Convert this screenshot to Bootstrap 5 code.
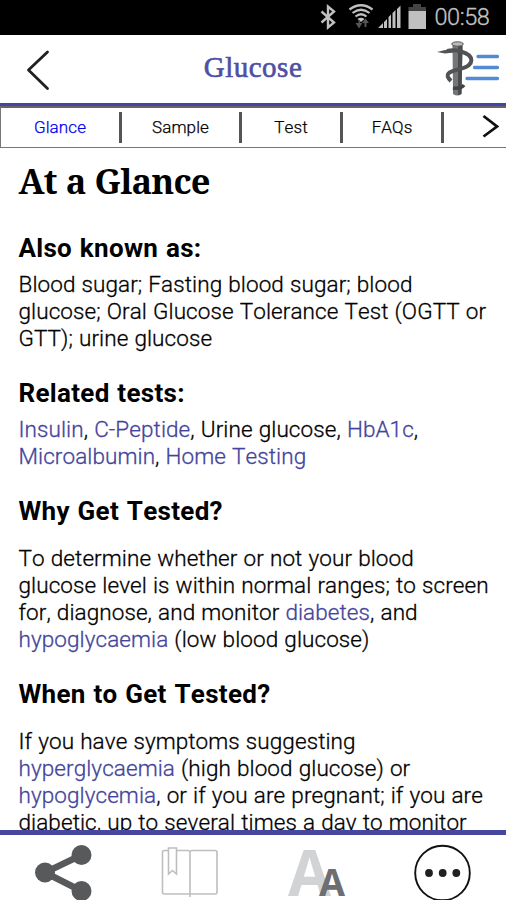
<!DOCTYPE html>
<html lang="en">
<head>
<meta charset="utf-8">
<meta name="viewport" content="width=device-width, initial-scale=1">
<title>Glucose</title>
<link href="https://cdn.jsdelivr.net/npm/bootstrap@5.3.0/dist/css/bootstrap.min.css" rel="stylesheet">
<style>
body{font-family:Roboto,"Liberation Sans",sans-serif;color:#000;background:#fff;height:900px;font-kerning:none}
.status{height:35px;background:#000;color:#c3c3c3;padding-right:15.5px}
.clock{font-size:23.5px;line-height:34px;letter-spacing:-.45px;width:56px;margin-left:1px;font-weight:300;-webkit-text-stroke:.3px}
.topbar{height:68px}
.topbar h1{font:400 29px/32px "Liberation Serif","Times New Roman",serif;color:#4d4fa3;-webkit-text-stroke:.6px #4d4fa3;letter-spacing:.5px;padding-bottom:4px}
.side{width:100px}
.tabs{height:45px;border-top:3px solid #4346a0;font-size:17px;font-weight:300;-webkit-text-stroke:.25px;letter-spacing:.1px}
.tabs-in{height:42px;border:1px solid #777;border-top:2px solid #666;border-right:0}
.tabs a{color:#000;text-decoration:none;height:31px;border-right:3px solid #555;line-height:31px;text-align:center}
.tabs a.active{color:#0000f0}
.article{height:682px;padding:0 0 0 18.5px;font-size:22.5px;font-weight:300;line-height:26.75px;white-space:nowrap}
.article h2{font:700 34.5px/44px "Noto Serif","Liberation Serif",serif;margin:11px 0 0;letter-spacing:-.9px;word-spacing:1px}
.article h3{font-size:26px;line-height:32px;font-weight:700;margin:0;letter-spacing:.3px;word-spacing:1px}
.article p{margin:0;letter-spacing:.08px;word-spacing:.5px;-webkit-text-stroke:.3px}
.article a{color:#43449b;text-decoration:none}
.tools{height:70px;border-top:5px solid #4547a0}
</style>
<script src="https://cdn.jsdelivr.net/npm/bootstrap@5.3.0/dist/js/bootstrap.bundle.min.js"></script>
</head>
<body class="d-flex flex-column overflow-hidden">
<div class="status d-flex justify-content-end flex-shrink-0">
  <svg width="117" height="35" viewBox="316 0 117 35" aria-hidden="true">
    <path d="M320.500 11.500L333 22.500 327 27.500V6.500l6 5L320.500 22.500" fill="none" stroke="#c0c0c0" stroke-width="2.400"/>
    <g transform="translate(-1 0)"><g fill="none" stroke="#c0c0c0" stroke-width="2.200"><path d="M349.500 9.500q11.500-8.500 23 0"/><path d="M352.500 13q8.500-6.500 17 0"/><path d="M355.500 16.500q5.500-4.500 11 0"/></g>
    <path d="M357.500 19q3.500-2.500 7 0l-3.500 3z" fill="#c0c0c0"/>
    <path d="M355.500 23h3v-3h1.500v3h2.500l-3.500 5.500zM362 23l3.500-4.500L369 23h-2.500v4h-2v-4z" fill="#555"/>
    <g fill="#c0c0c0"><path d="M378 28l5-5v5zM384 22l3-3v9h-3zM388.500 17l2.500-2.500V28h-2.500zM392.500 13l3-3v18h-3zM397 9l3.500-3.500V28H397z"/><path d="M408.500 11h17.500v18h-17.500z"/></g>
    <path d="M413 4h8v3h5v4h-17.500V7h4.500z" fill="#444"/></g>
  </svg>
  <span class="clock">00:58</span>
</div>
<header class="topbar d-flex align-items-center justify-content-between flex-shrink-0">
  <div class="side">
    <svg class="d-block" width="100" height="68" viewBox="0 35 100 68" aria-label="Back"><path d="M47.500 52L28.500 70 47.500 88.500" fill="none" stroke="#231f20" stroke-width="2.800" stroke-linejoin="round" stroke-linecap="round"/></svg>
  </div>
  <h1 class="mb-0">Glucose</h1>
  <div class="side">
    <svg class="d-block" width="100" height="68" viewBox="406 35 100 68" aria-label="Menu">
      <path d="M452.500 45h10l-1 49q-4 3-8.500 0z" fill="#747678"/><path d="M458 46h4.500l-1 48-3.500 1z" fill="#4a4c4e"/>
      <ellipse cx="457.500" cy="44" rx="5.800" ry="2.200" fill="#bbb" stroke="#555"/>
      <path d="M437 52l8-2 9-.5v3l-9 1z" fill="#555"/>
      <path d="M447 51q7-1.500 14 .5c14 4 14 14-1 17.500-12 3-16 5-9 12" fill="none" stroke="#505254" stroke-width="4"/>
      <path d="M453 88q8 1 11-3" fill="none" stroke="#444" stroke-width="3.500"/>
      <path d="M478 56.500h19.500M474.500 67.500h23M467 78.500h30.500" stroke="#528bd2" stroke-width="3.300" stroke-linecap="round"/>
    </svg>
  </div>
</header>
<nav class="tabs flex-shrink-0">
  <div class="tabs-in d-flex align-items-center">
    <a href="#" class="active" style="width:121px">Glance</a><a href="#" style="width:120px">Sample</a><a href="#" style="width:101px">Test</a><a href="#" style="width:101px">FAQs</a>
    <svg width="62" height="39" viewBox="444 108 62 39" aria-label="Next"><path d="M483.500 116l13.500 10.500-13.500 10" fill="none" stroke="#111" stroke-width="2.800"/></svg>
  </div>
</nav>
<main class="article overflow-hidden flex-shrink-0">
  <h2>At a Glance</h2>
  <h3 style="margin-top:29px">Also known as:</h3>
  <p style="margin-top:7px">Blood sugar; Fasting blood sugar; blood<br>glucose; Oral Glucose Tolerance Test (OGTT or<br>GTT); urine glucose</p>
  <h3 style="margin-top:26px">Related tests:</h3>
  <p style="margin-top:7px"><a href="#">Insulin</a>, <a href="#">C-Peptide</a>, Urine glucose, <a href="#">HbA1c</a>,<br><a href="#">Microalbumin</a>, <a href="#">Home Testing</a></p>
  <h3 style="margin-top:25px">Why Get Tested?</h3>
  <p style="margin-top:18.500px">To determine whether or not your blood<br>glucose level is within normal ranges; to screen<br>for, diagnose, and monitor <a href="#">diabetes</a>, and<br><a href="#">hypoglycaemia</a> (low blood glucose)</p>
  <h3 style="margin-top:25.500px">When to Get Tested?</h3>
  <p style="margin-top:18.500px">If you have symptoms suggesting<br><a href="#">hyperglycaemia</a> (high blood glucose) or<br><a href="#">hypoglycemia</a>, or if you are pregnant; if you are<br>diabetic, up to several times a day to monitor</p>
</main>
<footer class="tools flex-shrink-0">
  <svg class="d-block" width="506" height="65" viewBox="0 835 506 65">
    <g fill="#58595b"><circle cx="81.500" cy="855" r="10"/><circle cx="45" cy="872.500" r="10"/><circle cx="81.500" cy="891" r="10"/></g>
    <path d="M81.500 855L45 872.500 81.500 891" fill="none" stroke="#58595b" stroke-width="6.500"/>
    <g fill="none" stroke="#bcbec0" stroke-width="1.600"><path d="M168 850.500h-4q-1.500 0-1.500 1.500v40q0 2 2 2H215q2 0 2-2v-39.500q0-2-2-2h-23q-2 0-2 2-.5-2-2-2h-11M190 852v45"/><path d="M168.500 848h8v26l-4-3.500-4 3.500z"/></g>
    <text x="288" y="896" font-family="Open Sans,sans-serif" font-weight="700" font-size="64" fill="#d1d3d4" textLength="43" lengthAdjust="spacingAndGlyphs">A</text>
    <text x="319" y="896" font-family="Open Sans,sans-serif" font-weight="700" font-size="38" fill="#6d6e71" textLength="26" lengthAdjust="spacingAndGlyphs">A</text>
    <circle cx="442.500" cy="873" r="27.300" fill="none" stroke="#111" stroke-width="1.900"/>
    <g fill="#231f20"><circle cx="429" cy="873" r="3.900"/><circle cx="442.700" cy="873" r="3.900"/><circle cx="456.300" cy="873" r="3.900"/></g>
  </svg>
</footer>
</body>
</html>
